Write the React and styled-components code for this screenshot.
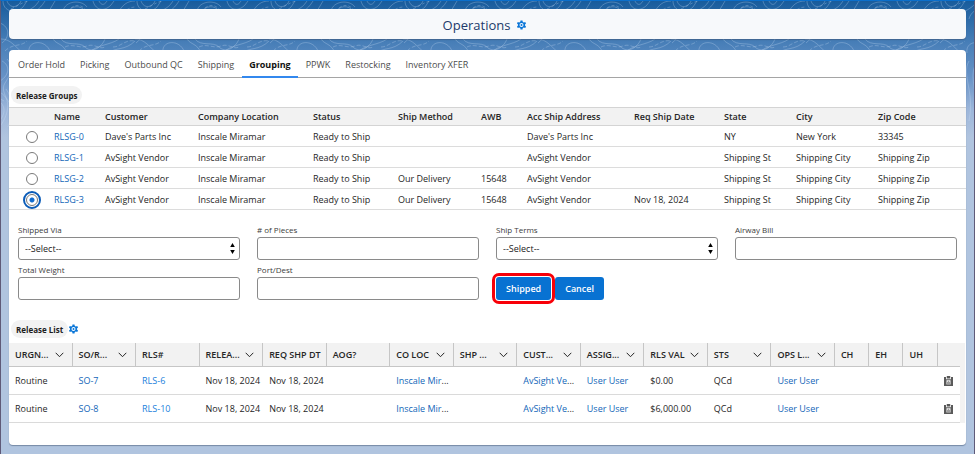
import React, { useState } from 'react';
import styled, { createGlobalStyle } from 'styled-components';

const GlobalStyle = createGlobalStyle`
  * {
    box-sizing: border-box;
  }
  body {
    margin: 0;
    background: #b0c4df;
    color: #262626;
    font-family: "Open Sans", "Noto Sans", sans-serif;
    font-size: 9px;
    line-height: 14px;
  }
`

const Page = styled.div`
  position: relative;
  display: flex;
  flex-direction: column;
  gap: 11px;
  min-height: 100vh;
  padding: 8px 8px 9px;
  border: solid #5f5a78;
  border-width: 1px 1px 0;
  border-top-color: #0b6fcb;
  background: linear-gradient(#185c9c, #4a80b9 44px, #6792c6 76px, #9cb6da 108px, #b0c4df 136px);
`

const Backdrop = styled.svg`
  position: absolute;
  top: 0;
  left: 0;
  width: 100%;
  height: 136px;
`

const Card = styled.section`
  position: relative;
  border-radius: 4px;
  background: #fff;
  box-shadow: 0 1px 1px rgba(60, 80, 110, 0.5);
`

const TitleCard = styled(Card)`
  display: flex;
  align-items: center;
  justify-content: center;
  gap: 7px;
  height: 30px;
  padding: 2px 6px 0 0;
  background: #f7f9fb;
`

const MainCard = styled(Card)`
  flex: 1;
`

const Title = styled.h1`
  margin: 0;
  color: #21396a;
  font-size: 13px;
  font-weight: 400;
  line-height: 18px;
`

const IconButton = styled.button`
  display: inline-flex;
  padding: 0;
  border: 0;
  background: none;
  color: ${props => (props.$muted ? '#5a5a5a' : '#0a76d8')};
  vertical-align: middle;
  cursor: pointer;
`

const Tabs = styled.nav`
  display: flex;
  gap: 1px;
  padding-left: 2px;
  border-bottom: 1px solid #a5a5a5;
`

const Tab = styled.button`
  height: 28px;
  margin-bottom: -1px;
  padding: 3px 7px 0;
  border: 0;
  border-bottom: 2px solid ${props => (props.$active ? '#3288ee' : 'transparent')};
  background: none;
  color: ${props => (props.$active ? '#111' : '#4c4c4c')};
  font: inherit;
  font-weight: ${props => (props.$active ? 700 : 400)};
  cursor: pointer;
`

const SectionHead = styled.div`
  display: flex;
  align-items: center;
  gap: 1px;
  padding: ${props => (props.$spaced ? '20px 2px 5px' : '8px 2px 3px')};
`

const Pill = styled.h2`
  margin: 0;
  padding: 3px 5px 1px;
  border-radius: 9px;
  background: #f2f2f2;
  color: #1c1c1c;
  font-size: 8px;
  font-weight: 700;
`

const Table = styled.table`
  width: 100%;
  border-spacing: 0;
  table-layout: fixed;
  text-align: left;
  white-space: nowrap;
`

const Col = styled.col`
  width: ${props => props.$w}px;
`

const GroupTh = styled.th`
  height: 19px;
  padding: 1px 0 0;
  border: solid #d4d4d4;
  border-width: 1px 0;
  background: #f2f2f2;
  font-weight: 600;
`

const GroupTd = styled.td`
  height: 21px;
  padding: 2px 0 0;
  border-bottom: 1px solid #dcdcdc;
`

const RadioTd = styled(GroupTd)`
  text-align: center;
  line-height: 0;
`

const Radio = styled.input`
  appearance: none;
  width: 12px;
  height: 12px;
  margin: 0;
  border: 1px solid #7a7a7a;
  border-radius: 50%;
  background: #fff;
  vertical-align: middle;
  &:checked {
    background: radial-gradient(circle, #0f6bd0 0 2px, #fff 3px);
    outline: 2px solid #0b5cb8;
    outline-offset: 1px;
  }
`

const Link = styled.a`
  color: ${props => (props.$bright ? '#1a80dc' : '#1266b8')};
  text-decoration: none;
`

const Form = styled.form`
  display: grid;
  grid-template-columns: repeat(4, 1fr);
  gap: 4px 17px;
  padding: 14px 9px 0;
`

const Field = styled.div`
  display: flex;
  flex-direction: column;
  gap: 1px;
`

const Label = styled.label`
  color: #3c3c3c;
  font-size: 8px;
  line-height: 12px;
`

const Input = styled.input`
  width: 100%;
  height: 23px;
  padding: 0 6px;
  border: 1px solid #8a8a8a;
  border-radius: 3px;
  background: #fff;
  color: #222;
  font: inherit;
`

const SelectBox = styled.div`
  display: grid;
  align-items: center;
  > * {
    grid-area: 1 / 1;
  }
  svg {
    justify-self: end;
    margin-right: 5px;
    pointer-events: none;
  }
`

const Select = styled(Input)`
  appearance: none;
`

const Actions = styled.div`
  display: flex;
  align-items: flex-end;
  gap: 4px;
`

const Button = styled.button`
  height: 23px;
  padding: 1px 10px 0;
  border: 0;
  border-radius: 3px;
  background: #0872d2;
  color: #fff;
  font: inherit;
  font-weight: 600;
  cursor: pointer;
  ${props => props.$marked && `
    outline: 3px solid #f80008;
    outline-offset: 1px;
  `}
`

const ListFrame = styled.div`
  margin-right: 1px;
  padding-right: 5px;
  background: #f2f2f2;
`

const ListTh = styled.th`
  height: 24px;
  padding: 0 0 0 6px;
  border: solid #c6c6c6;
  border-width: 0 1px 1px 0;
  font-weight: 600;
  &:last-child {
    border-right: 0;
  }
`

const ThContent = styled.div`
  display: flex;
  align-items: center;
  justify-content: space-between;
  padding-right: 8px;
`

const ListTd = styled.td`
  height: 28px;
  padding: 0 0 0 6px;
  border-bottom: 1px solid #dadada;
  background: #fff;
`

const tabs = ['Order Hold', 'Picking', 'Outbound QC', 'Shipping', 'Grouping', 'PPWK', 'Restocking', 'Inventory XFER']

const groupCols = [
  ['Name', 51],
  ['Customer', 93],
  ['Company Location', 115],
  ['Status', 85],
  ['Ship Method', 83],
  ['AWB', 46],
  ['Acc Ship Address', 107],
  ['Req Ship Date', 90],
  ['State', 72],
  ['City', 82],
  ['Zip Code', 88],
]

const groups = [
  ['RLSG-0', "Dave's Parts Inc", 'Inscale Miramar', 'Ready to Ship', '', '', "Dave's Parts Inc", '', 'NY', 'New York', '33345'],
  ['RLSG-1', 'AvSight Vendor', 'Inscale Miramar', 'Ready to Ship', '', '', 'AvSight Vendor', '', 'Shipping St', 'Shipping City', 'Shipping Zip'],
  ['RLSG-2', 'AvSight Vendor', 'Inscale Miramar', 'Ready to Ship', 'Our Delivery', '15648', 'AvSight Vendor', '', 'Shipping St', 'Shipping City', 'Shipping Zip'],
  ['RLSG-3', 'AvSight Vendor', 'Inscale Miramar', 'Ready to Ship', 'Our Delivery', '15648', 'AvSight Vendor', 'Nov 18, 2024', 'Shipping St', 'Shipping City', 'Shipping Zip'],
]

const listCols = [
  { name: 'URGN...', w: 63, menu: true },
  { name: 'SO/R...', w: 63, menu: true },
  { name: 'RLS#', w: 63 },
  { name: 'RELEA...', w: 63, menu: true },
  { name: 'REQ SHP DT', w: 63 },
  { name: 'AOG?', w: 63 },
  { name: 'CO LOC', w: 63, menu: true },
  { name: 'SHP ...', w: 63, menu: true },
  { name: 'CUST...', w: 63, menu: true },
  { name: 'ASSIG...', w: 63, menu: true },
  { name: 'RLS VAL', w: 63, menu: true },
  { name: 'STS', w: 63, menu: true },
  { name: 'OPS L...', w: 63, menu: true },
  { name: 'CH', w: 34 },
  { name: 'EH', w: 34 },
  { name: 'UH', w: 34 },
]

const releases = [
  { so: 'SO-7', rls: 'RLS-6', val: '$0.00' },
  { so: 'SO-8', rls: 'RLS-10', val: '$6,000.00' },
]

const Gear = () => (
  <svg width="9" height="10" viewBox="0 0 18 20" aria-hidden="true">
    <path
      fill="currentColor"
      fillRule="evenodd"
      d="M7 1h4l.6 2.800 2.200 1.200 2.700-1 1.500 3-2 2v2l2 2-1.500 3-2.700-1-2.200 1.200L11 19H7l-.6-2.800L4.200 15l-2.700 1L0 13l2-2V9L0 7l1.500-3 2.700 1 2.200-1.200zM9 6a4 4 0 1 0 0 8 4 4 0 0 0 0-8z"
    />
    <circle cx="9" cy="10" r="2" fill="currentColor" />
  </svg>
)

const Chevron = () => (
  <svg width="9" height="6" viewBox="0 0 9 6" fill="none" stroke="currentColor" aria-hidden="true">
    <path d="M.7.8l3.800 3.900L8.300.8" />
  </svg>
)

const Clipboard = () => (
  <svg width="9" height="10" viewBox="0 0 18 20" aria-hidden="true">
    <path fill="currentColor" d="M5.500 0h7v5h-7zM0 2h4v4.500h10V2h4v18H0z" />
    <path fill="#fff" d="M5 8.500h8V17H5z" />
    <path fill="currentColor" d="M7.800 9.500h2.400v2H12V17H6v-5.500h1.800z" opacity=".6" />
  </svg>
)

const UpDown = () => (
  <svg width="5" height="11" viewBox="0 0 5 11" aria-hidden="true">
    <path d="M2.500 0L4.800 4H.2zM2.500 11L.2 7h4.600z" />
  </svg>
)

const Contours = () => (
  <Backdrop aria-hidden="true">
    <defs>
      <pattern id="contours" width="134" height="136" patternUnits="userSpaceOnUse">
        <g fill="none" stroke="#cfe2f5" strokeOpacity=".28">
          <path d="M2 0c0 10 12 14 20 6l4-6M6 0c2 6 8 8 13 2l1-2M38 0c-6 10-14 8-16 16M44 0c-6 10-12 10-14 18M54 0l-6 10M62 10c2-10 18-12 24-4M66 12c4-8 14-8 18-2M92 0c2 8 10 12 18 4l3-4M98 0c2 4 5 5 8 0M118 10c4-6 8-10 16-10" />
          <path strokeDasharray="3 2" d="M10 8c8-4 14-8 18-8M70 7c5-4 10-3 14 1M122 12c4-4 8-6 12-6" />
          <path d="M0 38c10 0 14 8 22 14M28 52c-2-12 14-14 20-4l2 4M52 38c4 6 10 4 14 14M60 38c6 8 18 2 24 8s16 2 20-8M88 52c6-8 22-8 30-14M108 52c6-6 16-2 26-12" />
          <path strokeDasharray="4 2" d="M4 50c8-8 16-4 22-10M64 46c8-4 14 2 22-1s12 4 18 1M112 46c8 0 12-8 22-6" />
          <path d="M-1 22c10 4 10 14 2 20M1 60c8 4 8 14-2 20s-4 16 4 20M6 58c8 8 2 18-2 24s0 14 6 22M0 92c10 6 8 20 0 32M5 88c8 10 6 26 2 38M0 102c4 4 4 10 0 16M30 60c-8 14 6 30 0 60M36 64c-6 14 4 30 0 50M24 72c-4 10 0 22-4 40" />
        </g>
      </pattern>
    </defs>
    <rect width="100%" height="100%" fill="url(#contours)" />
  </Backdrop>
)

const SelectField = ({ id, label }) => (
  <Field>
    <Label htmlFor={id}>{label}</Label>
    <SelectBox>
      <Select as="select" id={id}>
        <option>--Select--</option>
      </Select>
      <UpDown />
    </SelectBox>
  </Field>
)

const TextField = ({ id, label }) => (
  <Field>
    <Label htmlFor={id}>{label}</Label>
    <Input id={id} type="text" />
  </Field>
)

const GroupTable = () => {
  const [selected, setSelected] = useState('RLSG-3')

  return (
    <Table>
      <colgroup>
        <Col $w={45} />
        {groupCols.map(([name, w]) => <Col key={name} $w={w} />)}
      </colgroup>
      <thead>
        <tr>
          <GroupTh aria-label="Select" />
          {groupCols.map(([name]) => <GroupTh key={name}>{name}</GroupTh>)}
        </tr>
      </thead>
      <tbody>
        {groups.map(([name, ...cells]) => (
          <tr key={name}>
            <RadioTd>
              <Radio
                type="radio"
                name="group"
                aria-label={name}
                checked={selected === name}
                onChange={() => setSelected(name)}
              />
            </RadioTd>
            <GroupTd><Link href="#">{name}</Link></GroupTd>
            {cells.map((cell, i) => <GroupTd key={i}>{cell}</GroupTd>)}
          </tr>
        ))}
      </tbody>
    </Table>
  )
}

const ReleaseTable = () => (
  <ListFrame>
    <Table>
      <colgroup>
        {listCols.map(col => <Col key={col.name} $w={col.w} />)}
        <Col $w={22} />
      </colgroup>
      <thead>
        <tr>
          {listCols.map(col => (
            <ListTh key={col.name}>
              <ThContent>
                {col.name}
                {col.menu && <Chevron />}
              </ThContent>
            </ListTh>
          ))}
          <ListTh aria-label="Actions" />
        </tr>
      </thead>
      <tbody>
        {releases.map(r => (
          <tr key={r.rls}>
            <ListTd>Routine</ListTd>
            <ListTd><Link href="#">{r.so}</Link></ListTd>
            <ListTd><Link href="#" $bright>{r.rls}</Link></ListTd>
            <ListTd>Nov 18, 2024</ListTd>
            <ListTd>Nov 18, 2024</ListTd>
            <ListTd />
            <ListTd><Link href="#">Inscale Mir</Link>...</ListTd>
            <ListTd />
            <ListTd><Link href="#">AvSight Ve</Link>...</ListTd>
            <ListTd><Link href="#">User User</Link></ListTd>
            <ListTd>{r.val}</ListTd>
            <ListTd>QCd</ListTd>
            <ListTd><Link href="#">User User</Link></ListTd>
            <ListTd />
            <ListTd />
            <ListTd />
            <ListTd><IconButton $muted aria-label="Notes"><Clipboard /></IconButton></ListTd>
          </tr>
        ))}
      </tbody>
    </Table>
  </ListFrame>
)

export default function App() {
  const [tab, setTab] = useState('Grouping')

  return (
    <Page>
      <GlobalStyle />
      <Contours />
      <TitleCard>
        <Title>Operations</Title>
        <IconButton aria-label="Page settings"><Gear /></IconButton>
      </TitleCard>
      <MainCard>
        <Tabs>
          {tabs.map(t => (
            <Tab key={t} $active={t === tab} onClick={() => setTab(t)}>{t}</Tab>
          ))}
        </Tabs>
        <SectionHead>
          <Pill>Release Groups</Pill>
        </SectionHead>
        <GroupTable />
        <Form onSubmit={e => e.preventDefault()}>
          <SelectField id="via" label="Shipped Via" />
          <TextField id="pieces" label="# of Pieces" />
          <SelectField id="terms" label="Ship Terms" />
          <TextField id="awb" label="Airway Bill" />
          <TextField id="weight" label="Total Weight" />
          <TextField id="port" label="Port/Dest" />
          <Actions>
            <Button $marked>Shipped</Button>
            <Button type="button">Cancel</Button>
          </Actions>
        </Form>
        <SectionHead $spaced>
          <Pill>Release List</Pill>
          <IconButton aria-label="List settings"><Gear /></IconButton>
        </SectionHead>
        <ReleaseTable />
      </MainCard>
    </Page>
  )
}
